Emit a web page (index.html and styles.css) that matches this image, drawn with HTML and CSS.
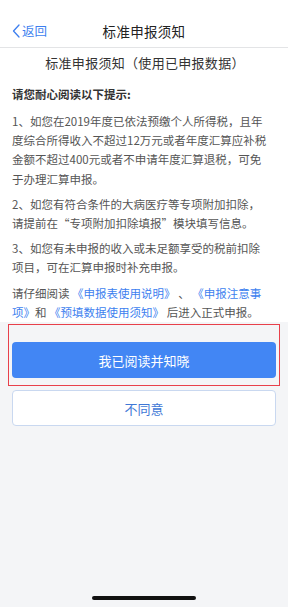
FILE: index.html
```html
<!DOCTYPE html>
<html lang="zh-CN">
<head>
    <meta charset="UTF-8">
    <meta name="viewport" content="width=device-width, initial-scale=1.0">
    <title>标准申报须知</title>
    <link rel="stylesheet" href="styles.css">
</head>
<body>
    <div class="page">
        <div class="navBar">
            <a class="backBtn" href="#">
                <svg class="backIcon" width="8" height="14" viewBox="0 0 8 14">
                    <path d="M7 1 L1.5 7 L7 13" fill="none" stroke="#3d7fef" stroke-width="1.3" stroke-linecap="round" stroke-linejoin="round"/>
                </svg>
                <span>返回</span>
            </a>
            <div class="navTitle">标准申报须知</div>
        </div>

        <div class="notice">
            <div class="subTitle">标准申报须知（使用已申报数据）</div>
            <div class="tipHead">请您耐心阅读以下提示:</div>
            <p class="tipText">1、如您在2019年度已依法预缴个人所得税，且年<br>度综合所得收入不超过12万元或者年度汇算应补税<br>金额不超过400元或者不申请年度汇算退税，可免<br>于办理汇算申报。</p>
            <p class="tipText">2、如您有符合条件的大病医疗等专项附加扣除，<br>请提前在“专项附加扣除填报”模块填写信息。</p>
            <p class="tipText">3、如您有未申报的收入或未足额享受的税前扣除<br>项目，可在汇算申报时补充申报。</p>
            <p class="tipText">请仔细阅读 <a href="#">《申报表使用说明》</a> 、 <a href="#">《申报注意事<br>项》</a>和 <a href="#">《预填数据使用须知》</a> 后进入正式申报。</p>
        </div>

        <div class="actions">
            <div class="markBox">
                <button class="btn btnMain">我已阅读并知晓</button>
            </div>
            <button class="btn btnGhost">不同意</button>
        </div>

        <div class="homeBar"></div>
    </div>
</body>
</html>
```

FILE: styles.css
```css
body {
    margin: 0;
    background: #f4f5f7;
    font-family: "Noto Sans CJK SC", "Noto Sans", sans-serif;
    color: #333;
}
.page {
    height: 607px;
    display: flex;
    flex-direction: column;
}
.navBar {
    background: #fff;
    height: 32px;
    padding-top: 15px;
    border-bottom: 1px solid #e3e4e6;
    display: flex;
    align-items: center;
    justify-content: center;
    position: relative;
}
.backBtn {
    position: absolute;
    left: 12px;
    top: 23px;
    display: flex;
    align-items: center;
    gap: 2px;
    color: #3d7fef;
    text-decoration: none;
    font-size: 12.5px;
    line-height: 16px;
}
.navTitle {
    font-size: 13.5px;
    color: #222;
    letter-spacing: 0.3px;
}
.notice {
    background: #fff;
    padding: 5px 10px 0 12px;
}
.subTitle {
    text-align: center;
    font-size: 13px;
    line-height: 20px;
    color: #333;
    letter-spacing: 0.3px;
}
.tipHead {
    margin-top: 11px;
    font-size: 11.5px;
    line-height: 20px;
    font-weight: 700;
    color: #333;
}
.tipText {
    margin: 8px 0 0;
    font-size: 11.5px;
    line-height: 19.2px;
    color: #555;
    white-space: nowrap;
}
.tipText + .tipText {
    margin-top: 6px;
}
.tipText a {
    color: #3d7fef;
    text-decoration: none;
}
.actions {
    padding: 2px 8px 0;
    display: flex;
    flex-direction: column;
    gap: 4px;
}
.markBox {
    border: 1px solid #e8404b;
    padding: 17px 3px 7px;
}
.btn {
    width: 100%;
    height: 36px;
    border-radius: 4px;
    font-family: inherit;
    font-size: 13px;
    cursor: pointer;
}
.btnMain {
    background: #4286f4;
    border: none;
    color: #fff;
}
.btnGhost {
    margin: 0 4px;
    width: calc(100% - 8px);
    background: #fff;
    border: 1px solid #c9d8f0;
    color: #3f78d6;
}
.homeBar {
    margin: auto auto 7px;
    width: 104px;
    height: 4px;
    border-radius: 2px;
    background: #111;
}
```
